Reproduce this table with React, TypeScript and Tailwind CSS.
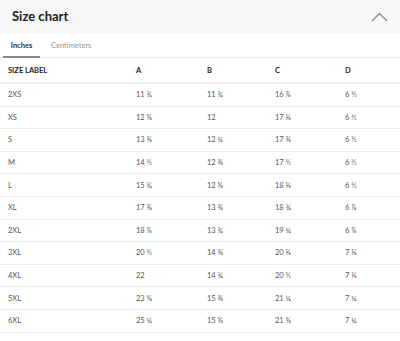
import React from "react";

const rows: [string, string, string, string, string][] = [
  ["2XS", "11 ¾", "11 ¾", "16 ⅞", "6 ½"],
  ["XS", "12 ⅝", "12", "17 ⅛", "6 ½"],
  ["S", "13 ⅜", "12 ¼", "17 ⅜", "6 ½"],
  ["M", "14 ½", "12 ⅜", "17 ½", "6 ½"],
  ["L", "15 ¾", "12 ⅝", "18 ⅛", "6 ½"],
  ["XL", "17 ⅜", "13 ⅜", "18 ¾", "6 ⅞"],
  ["2XL", "18 ⅞", "13 ¾", "19 ¼", "6 ⅞"],
  ["3XL", "20 ½", "14 ⅜", "20 ⅛", "7 ⅛"],
  ["4XL", "22", "14 ¾", "20 ½", "7 ⅛"],
  ["5XL", "23 ⅝", "15 ⅜", "21 ¼", "7 ¼"],
  ["6XL", "25 ¼", "15 ⅝", "21 ⅝", "7 ¼"],
];

export default function App() {
  return (
    <div
      className="w-[400px] h-[341px] bg-white overflow-hidden"
      style={{ fontFamily: "Lato, 'Open Sans', sans-serif" }}
    >
      <div className="h-[33px] bg-[#f7f7f7] flex items-center justify-between pl-[12px] pr-[12px]">
        <span className="text-[13px] font-bold text-[#222]">Size chart</span>
        <svg width="17" height="10" viewBox="0 0 17 10" fill="none">
          <path d="M1 9 L8.5 1.5 L16 9" stroke="#8a8a8a" strokeWidth="1.4" />
        </svg>
      </div>
      <div className="flex h-[25px] border-b border-[#ececec] items-stretch pt-[2px]">
        <div className="ml-[3px] w-[37px] flex items-center justify-center border-b-2 border-[#888] text-[7.5px] font-bold text-[#333] -mb-px">
          Inches
        </div>
        <div className="ml-[11px] flex items-center text-[7.5px] text-[#999]">Centimeters</div>
      </div>
      <div className="text-[7.5px] text-[#555]">
        <div className="flex h-[26px] items-center pt-[2px] border-b-2 border-[#f0f0f0] font-bold text-[#222]">
          <div className="w-[136px] pl-[8px]">SIZE LABEL</div>
          <div className="w-[71px]">A</div>
          <div className="w-[68px]">B</div>
          <div className="w-[70px]">C</div>
          <div>D</div>
        </div>
        {rows.map((r) => (
          <div key={r[0]} className="flex h-[22.6px] items-center border-b border-[#ececec]">
            <div className="w-[136px] pl-[8px]">{r[0]}</div>
            <div className="w-[71px]">{r[1]}</div>
            <div className="w-[68px]">{r[2]}</div>
            <div className="w-[70px]">{r[3]}</div>
            <div>{r[4]}</div>
          </div>
        ))}
      </div>
    </div>
  );
}
